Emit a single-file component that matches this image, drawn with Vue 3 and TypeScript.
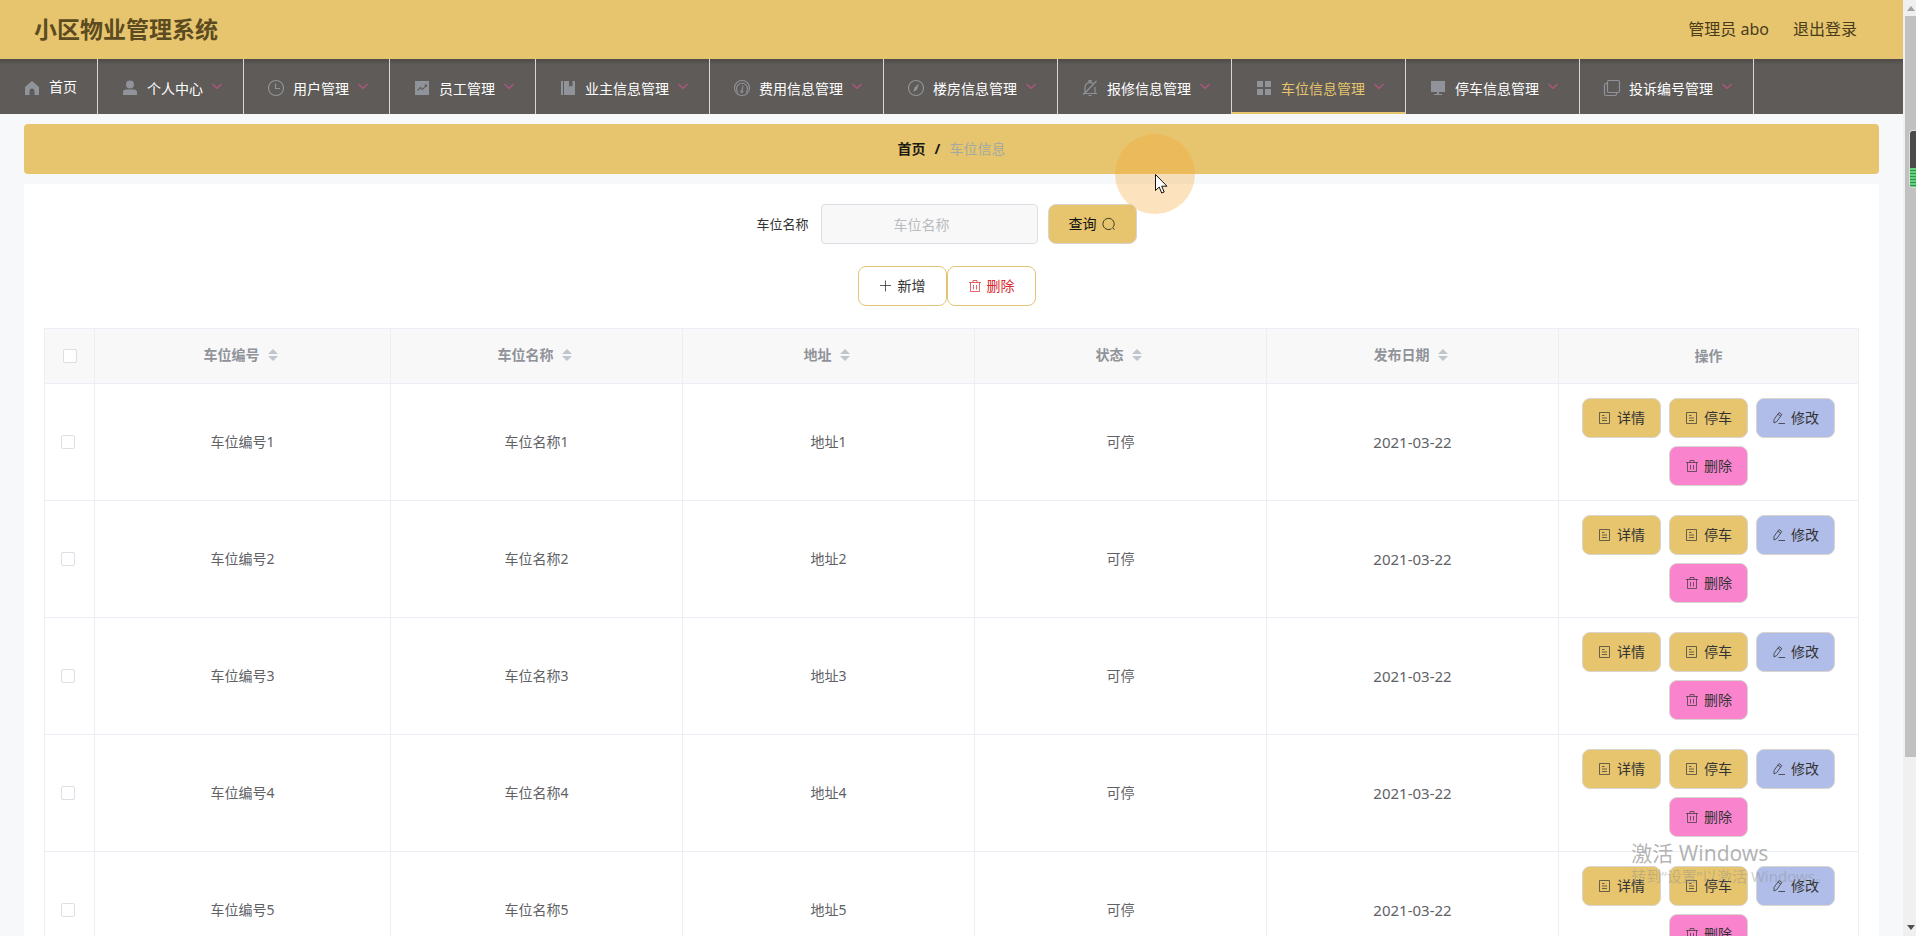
<script setup lang="ts">
import { ref } from 'vue'

interface MenuItem {
  label: string
  icon: string
  sub: boolean
  active?: boolean
}

const menu: MenuItem[] = [
  { label: '首页', icon: 'home', sub: false },
  { label: '个人中心', icon: 'user', sub: true },
  { label: '用户管理', icon: 'clock', sub: true },
  { label: '员工管理', icon: 'chart', sub: true },
  { label: '业主信息管理', icon: 'book', sub: true },
  { label: '费用信息管理', icon: 'gauge', sub: true },
  { label: '楼房信息管理', icon: 'compass', sub: true },
  { label: '报修信息管理', icon: 'bell', sub: true },
  { label: '车位信息管理', icon: 'grid', sub: true, active: true },
  { label: '停车信息管理', icon: 'monitor', sub: true },
  { label: '投诉编号管理', icon: 'copy', sub: true },
]

const columns: string[] = ['车位编号', '车位名称', '地址', '状态', '发布日期']

const rows = ref(
  [1, 2, 3, 4, 5].map((n) => ({
    id: n,
    code: `车位编号${n}`,
    name: `车位名称${n}`,
    address: `地址${n}`,
    status: '可停',
    date: '2021-03-22',
    checked: false,
  })),
)

const actions = [
  { label: '详情', icon: 'doc', kind: 'gold' },
  { label: '停车', icon: 'doc', kind: 'gold' },
  { label: '修改', icon: 'edit', kind: 'blue' },
  { label: '删除', icon: 'trash', kind: 'pink' },
]

const keyword = ref('')
const allChecked = ref(false)

function toggleAll(): void {
  rows.value.forEach((r) => (r.checked = allChecked.value))
}
</script>

<template>
  <svg class="sprite" aria-hidden="true">
    <symbol id="i-home" viewBox="0 0 18 18">
      <path d="M9 2 2 8v8h4.500v-4a2.500 2.500 0 0 1 5 0v4H16V8z" fill="currentColor" />
    </symbol>
    <symbol id="i-user" viewBox="0 0 18 18">
      <circle cx="9" cy="5.500" r="4" fill="currentColor" />
      <path d="M2 16v-2.500q0-3 3-3h8q3 0 3 3V16z" fill="currentColor" />
    </symbol>
    <symbol id="i-clock" viewBox="0 0 18 18">
      <g fill="none" stroke="currentColor" stroke-width="1.200">
        <circle cx="9" cy="9" r="7.500" />
        <path d="M8.500 4.500v5h4.500" />
      </g>
    </symbol>
    <symbol id="i-chart" viewBox="0 0 18 18">
      <rect x="2" y="2" width="14" height="14" fill="currentColor" />
      <path d="m4.500 11.500 3-3 2 2L13.500 6M11.500 6h2v2" fill="none" stroke="#5e5b59" stroke-width="1.100" />
    </symbol>
    <symbol id="i-book" viewBox="0 0 18 18">
      <path d="M2 2h2v14H2zM5 2h5v6l1.700-1.500L13.500 8V2H16v14H5z" fill="currentColor" />
    </symbol>
    <symbol id="i-gauge" viewBox="0 0 18 18">
      <g fill="none" stroke="currentColor" stroke-width="1.100">
        <circle cx="9" cy="9" r="7.500" />
        <path d="M5 13.500a5.500 5.500 0 1 1 8 0M9 12l1-5.500" />
        <circle cx="8.800" cy="12.500" r="1" />
      </g>
    </symbol>
    <symbol id="i-compass" viewBox="0 0 18 18">
      <circle cx="9" cy="9" r="7.500" fill="none" stroke="currentColor" stroke-width="1.200" />
      <path d="m12 4.500-4.700 4.200-.800 4.300 3.700-2.500z" fill="currentColor" />
    </symbol>
    <symbol id="i-bell" viewBox="0 0 18 18">
      <path
        d="M2 14.500h14M4 14.500V8.500a5 5 0 0 1 8-4M14 8v6.500M8 3V1.500h2V3M7.500 16.500h3M15.500 2 2.500 15.500"
        fill="none"
        stroke="currentColor"
        stroke-width="1.200"
      />
    </symbol>
    <symbol id="i-grid" viewBox="0 0 18 18">
      <path d="M2 2h6v6H2zM10 2h6v6h-6zM2 10h6v6H2zM10 10h6v6h-6z" fill="currentColor" />
    </symbol>
    <symbol id="i-monitor" viewBox="0 0 18 18">
      <path d="M2 2h14v11H2zM8 13h2v2h3v1H5v-1h3z" fill="currentColor" />
    </symbol>
    <symbol id="i-copy" viewBox="0 0 18 18">
      <g fill="none" stroke="currentColor" stroke-width="1.200">
        <rect x="4.500" y="1.500" width="12" height="12" rx="1.500" />
        <path d="M4.500 4.500H3Q1.500 4.500 1.500 6v9q0 1.500 1.500 1.500h9q1.500 0 1.500-1.500v-1.500" />
      </g>
    </symbol>
    <symbol id="i-arrow" viewBox="0 0 12 12">
      <path d="m1.500 4 4.500 4.500L10.500 4" fill="none" stroke="currentColor" stroke-width="1.200" />
    </symbol>
    <symbol id="i-search" viewBox="0 0 14 14">
      <path d="M9.500 11.700a5.600 5.600 0 1 1 1.200-1l1.600 2" fill="none" stroke="currentColor" stroke-width=".8" />
    </symbol>
    <symbol id="i-plus" viewBox="0 0 14 14">
      <path d="M6.500 1.500v11M1 6.500h11" fill="none" stroke="currentColor" stroke-width=".8" />
    </symbol>
    <symbol id="i-trash" viewBox="0 0 14 14">
      <path
        d="M1 3.500h12M2.500 3.500v9h9v-9M5 3.500v-2h4v2M5.500 6v4.500M8.500 6v4.500"
        fill="none"
        stroke="currentColor"
        stroke-width=".7"
      />
    </symbol>
    <symbol id="i-doc" viewBox="0 0 14 14">
      <path
        d="M1.500 1.500h10v11h-10zM4 4.500h2.500M4 7h5M4 9.500h5"
        fill="none"
        stroke="currentColor"
        stroke-width=".7"
      />
    </symbol>
    <symbol id="i-edit" viewBox="0 0 14 14">
      <path
        d="m2 8.500 5-7 2.800 2-5 7L2 12zM6 3.200 8.700 5.200M6.500 12.500h6.500"
        fill="none"
        stroke="currentColor"
        stroke-width=".8"
      />
    </symbol>
  </svg>

  <div class="window">
    <div class="page">
      <header class="top">
        <h1>小区物业管理系统</h1>
        <div class="account">
          <span>管理员 abo</span>
          <a href="#logout">退出登录</a>
        </div>
      </header>

      <nav class="menu">
        <a v-for="m in menu" :key="m.label" href="#" :class="{ active: m.active, plain: !m.sub }">
          <span class="slot"><svg class="micon"><use :href="`#i-${m.icon}`" /></svg></span>
          <span class="mtext">{{ m.label }}</span>
          <svg v-if="m.sub" class="arrow"><use href="#i-arrow" /></svg>
        </a>
      </nav>

      <main>
        <div class="crumbs">
          <a href="#">首页</a><b>/</b><span>车位信息</span>
        </div>

        <section class="panel">
          <form class="search" @submit.prevent>
            <label for="kw">车位名称</label>
            <input id="kw" v-model="keyword" type="text" placeholder="车位名称" />
            <button class="btn gold query" type="submit">
              查询<svg class="bicon"><use href="#i-search" /></svg>
            </button>
          </form>
          <div class="tools">
            <button class="btn outline" type="button">
              <svg class="bicon"><use href="#i-plus" /></svg>新增
            </button>
            <button class="btn outline danger" type="button">
              <svg class="bicon"><use href="#i-trash" /></svg>删除
            </button>
          </div>

          <table>
            <colgroup>
              <col class="c-check" />
              <col v-for="(c, i) in columns" :key="c" :class="{ 'c-first': i === 0 }" />
              <col class="c-ops" />
            </colgroup>
            <thead>
              <tr>
                <th><input v-model="allChecked" type="checkbox" aria-label="全选" @change="toggleAll" /></th>
                <th v-for="c in columns" :key="c">
                  <span class="sortable">{{ c }}<i class="caret"></i></span>
                </th>
                <th>操作</th>
              </tr>
            </thead>
            <tbody>
              <tr v-for="r in rows" :key="r.id">
                <td><input v-model="r.checked" type="checkbox" :aria-label="r.code" /></td>
                <td>{{ r.code }}</td>
                <td>{{ r.name }}</td>
                <td>{{ r.address }}</td>
                <td>{{ r.status }}</td>
                <td class="date">{{ r.date }}</td>
                <td>
                  <div class="ops">
                    <button v-for="a in actions" :key="a.label" type="button" class="btn small" :class="a.kind">
                      <svg class="bicon"><use :href="`#i-${a.icon}`" /></svg>{{ a.label }}
                    </button>
                  </div>
                </td>
              </tr>
            </tbody>
          </table>
        </section>
      </main>
    </div>

    <div class="scrollbar" aria-hidden="true">
      <i class="up"></i>
      <div class="track"><div class="thumb"></div></div>
      <i class="down"></i>
    </div>

    <div class="meter" aria-hidden="true"><i></i></div>
    <div class="halo" aria-hidden="true"></div>
    <svg class="pointer" viewBox="0 0 13 20" aria-hidden="true">
      <path d="M.5.500v16l3.700-3.500 2.500 6 2.500-1-2.500-5.800h5.300z" fill="#fff" stroke="#111" />
    </svg>
    <div class="watermark">
      <p>激活 Windows</p>
      <small>转到“设置”以激活 Windows。</small>
    </div>
  </div>
</template>

<style>
body {
  margin: 0;
}
</style>

<style scoped>
* {
  box-sizing: border-box;
}
.sprite {
  position: absolute;
  width: 0;
  height: 0;
}
.window {
  position: relative;
  display: flex;
  height: 100vh;
  overflow: hidden;
  background: #f6f8fa;
  font: 14px/20px 'Noto Sans', 'Noto Sans CJK SC', sans-serif;
  color: #606266;
}
.page {
  flex: 1;
  min-width: 0;
}
a {
  color: inherit;
  text-decoration: none;
}
.top {
  display: flex;
  align-items: center;
  justify-content: space-between;
  height: 59px;
  padding: 0 46px 2px 34px;
  background: #e6c56e;
  color: #4a3c1a;
}
.top h1 {
  margin: 0;
  font-size: 23px;
  line-height: 32px;
  color: #5c4b20;
}
.account {
  display: flex;
  gap: 24px;
  font-size: 16px;
}
.menu {
  display: flex;
  height: 55px;
  background: linear-gradient(#4d4a47, #5e5b59 6px);
  color: #fff;
}
.menu a {
  display: flex;
  align-items: center;
  padding: 2px 20px 0;
  border-right: 1px solid #d8d8d8;
  white-space: nowrap;
}
.menu a.active {
  color: #e6c56e;
  box-shadow: inset 0 -2px #e6c56e;
}
.slot {
  display: flex;
  justify-content: center;
  width: 24px;
  margin-right: 5px;
}
.micon {
  width: 18px;
  height: 18px;
  color: #909399;
}
.mtext {
  padding-top: 2px;
}
.plain .mtext {
  padding: 0 0 2px;
}
.arrow {
  width: 12px;
  height: 12px;
  margin: 0 0 4px 8px;
  color: #b8557f;
}
main {
  padding: 10px 24px;
}
.crumbs {
  display: flex;
  justify-content: center;
  align-items: center;
  gap: 9px;
  height: 50px;
  border-radius: 4px;
  background: #e6c56e;
  color: #a3a9a3;
}
.crumbs a,
.crumbs b {
  font-weight: 700;
  color: #1c1a12;
}
.panel {
  margin-top: 10px;
  padding: 20px;
  background: #fff;
}
.search {
  display: flex;
  justify-content: center;
  align-items: center;
  padding-right: 10px;
}
.search label {
  margin-right: 12px;
  font-size: 13px;
  color: #333;
}
.search input {
  width: 217px;
  height: 40px;
  padding: 0 30px 0 15px;
  border: 1px solid #dcdfe6;
  border-radius: 4px;
  background: #f8f8f8;
  font: inherit;
  text-align: center;
}
.search input::placeholder {
  color: #b8bbc0;
}
.btn {
  display: flex;
  align-items: center;
  gap: 5px;
  height: 40px;
  padding: 0 20px;
  border: 1px solid #d8d5cf;
  border-radius: 8px;
  font: inherit;
  color: #333;
  white-space: nowrap;
}
.bicon {
  width: 14px;
  height: 14px;
}
.gold {
  background: #e6c56e;
}
.blue {
  background: #b0bde9;
}
.pink {
  background: #f984cd;
}
.query {
  margin-left: 10px;
  color: #111;
}
.outline {
  border-color: #e0c573;
  background: #fff;
}
.danger {
  color: #d8282f;
}
.small {
  padding: 0 15px;
}
.tools {
  display: flex;
  justify-content: center;
  margin: 22px 10px 22px 0;
}
table {
  width: 100%;
  table-layout: fixed;
  border-collapse: collapse;
}
.c-check {
  width: 50px;
}
.c-first {
  width: 296px;
}
.c-ops {
  width: 300px;
}
th,
td {
  padding: 14px 10px;
  border: 1px solid #ebeef5;
  text-align: center;
}
th {
  height: 55px;
  padding: 0;
  background: #f8f8f8;
  color: #909399;
  font-weight: 700;
}
.date {
  font-size: 15px;
}
.sortable {
  display: inline-flex;
  align-items: center;
  gap: 8px;
  padding: 0 4px 2px 0;
}
.caret {
  display: flex;
  flex-direction: column;
  gap: 2px;
}
.caret::before,
.caret::after {
  content: '';
  border: 5px solid transparent;
}
.caret::before {
  border-top: 0;
  border-bottom-color: #c0c4cc;
}
.caret::after {
  border-bottom: 0;
  border-top-color: #c0c4cc;
}
input[type='checkbox'] {
  appearance: none;
  display: block;
  width: 14px;
  height: 14px;
  margin: 0 auto;
  border: 1px solid #dcdfe6;
  border-radius: 2px;
  background: #fff;
}
td input[type='checkbox'] {
  margin-left: 6px;
}
input[type='checkbox']:checked {
  background: #e6c56e;
}
.ops {
  display: flex;
  flex-wrap: wrap;
  justify-content: center;
  gap: 8px;
}
.scrollbar {
  display: flex;
  flex-direction: column;
  align-items: center;
  justify-content: space-between;
  width: 13px;
  padding: 6px 0 6px 2px;
  background: #f0f0f0;
}
.track {
  flex: 1;
  align-self: stretch;
  margin: 5px 0;
}
.thumb {
  height: 82%;
  background: #c1c1c1;
}
.up,
.down {
  border: 4px solid transparent;
}
.up {
  border-top: 0;
  border-bottom: 5px solid #a3a3a3;
}
.down {
  border-bottom: 0;
  border-top: 5px solid #505050;
}
.meter {
  position: absolute;
  top: 130px;
  right: 0;
  display: flex;
  align-items: flex-end;
  width: 7px;
  height: 58px;
  border: 1px solid #ddd;
  border-right: 0;
  border-radius: 4px 0 0 4px;
  background: #4a4a4a;
  overflow: hidden;
}
.meter i {
  width: 100%;
  height: 19px;
  background: repeating-linear-gradient(#5fd47b 0 2px, #3b8a4e 2px 3px);
}
.halo {
  position: absolute;
  top: 134px;
  left: 1115px;
  width: 80px;
  height: 80px;
  border-radius: 50%;
  background: rgba(245, 166, 50, 0.32);
  pointer-events: none;
}
.pointer {
  position: absolute;
  top: 174px;
  left: 1155px;
  width: 13px;
  height: 20px;
}
.watermark {
  position: absolute;
  right: 86px;
  bottom: 50px;
  color: rgba(130, 130, 130, 0.6);
  pointer-events: none;
}
.watermark p {
  margin: 0;
  font-size: 21px;
  line-height: 26px;
}
.watermark small {
  display: block;
  font-size: 15px;
  line-height: 20px;
  color: rgba(140, 140, 140, 0.42);
}
</style>
